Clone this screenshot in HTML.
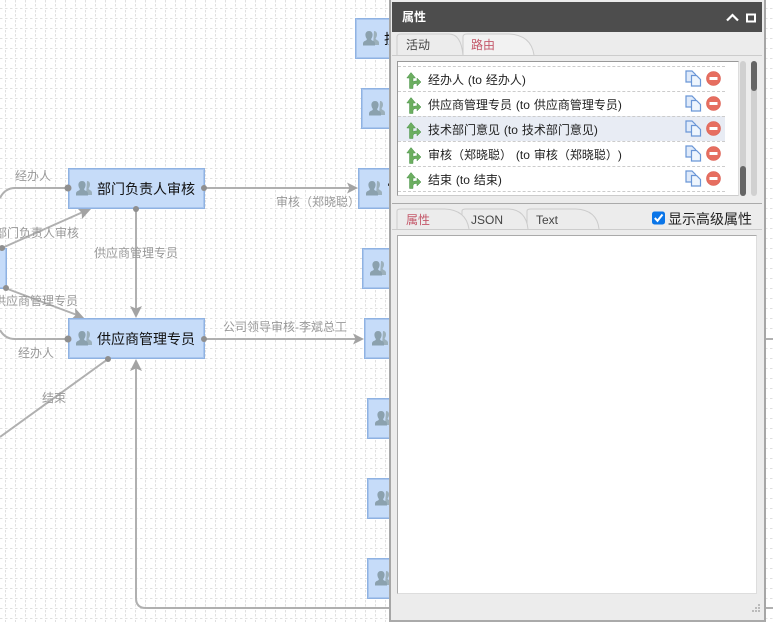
<!DOCTYPE html>
<html><head><meta charset="utf-8">
<style>
html,body{margin:0;padding:0}
body{width:773px;height:622px;position:relative;overflow:hidden;background:#fff;font-family:"Liberation Sans","Noto Sans CJK SC",sans-serif;color:#222}
.abs{position:absolute}
.node{position:absolute;height:39px;background:#c6dcf9;border:1px solid #8fb2e2;box-shadow:inset 0 0 0 1px #a9c6ee;font-size:14px;line-height:40px;color:#111;white-space:nowrap;overflow:hidden}
.node svg{position:absolute;left:7px;top:12px}
.node span{position:absolute;left:28px;top:0}
.lb{position:absolute;font-size:12px;line-height:16px;color:#999;white-space:nowrap}
#panel{position:absolute;left:389px;top:0;background:#ececec;border-left:2px solid #a6a6a6;border-right:2px solid #a6a6a6;border-bottom:2px solid #aaa;box-sizing:border-box;width:377px;height:622px}
.tabline{position:absolute;height:1px;background:#ccc}
.row{position:absolute;left:0;width:327px;height:24px;border-top:1px dashed #ccc;font-size:12px;line-height:25px;color:#222;white-space:nowrap}
.row.sel{background:#e8ecf4}
.row .t{position:absolute;left:30px;top:1px;word-spacing:.6px}
.row svg{position:absolute}
.g{left:8px;top:5px}.c{left:287px;top:3px}.m{left:308px;top:4px}
</style></head>
<body>
<svg class="abs" style="left:0;top:0" width="773" height="622">
<defs>
<pattern id="g" x="0" y="0" width="10" height="10" patternUnits="userSpaceOnUse">
<path d="M0 8.500h2.500M5 8.500h2.500M5.500 0v2.500M5.500 4v2.500" stroke="#e0e0e0" stroke-width="1" fill="none"/>
</pattern>
<symbol id="p" viewBox="0 0 16 15">
<path d="M11 0c2 0 3 1.500 3 3.500 0 1.700-.7 3-1.300 3.800-.2.800.3 1.300 1.300 1.800 1 .4 1.700.9 2 2.400V14H10z" fill="#9cb0bb"/>
<path d="M6 0c2.400 0 3.600 1.700 3.600 3.800 0 1.800-.7 3.200-1.400 4.100-.2.900.4 1.400 1.500 1.900 1.200.5 2 1 2.300 2.400V14.500H0v-2.300c.3-1.400 1.100-1.900 2.300-2.400 1.100-.5 1.700-1 1.500-1.900C3.100 7 2.400 5.600 2.400 3.800 2.400 1.700 3.800 0 6 0z" fill="#8ba1ae"/>
</symbol>
<symbol id="ga" viewBox="0 0 16 18">
<path d="M5 .5L9.500 6H7V10Q7.500 9 9.500 9H11V6L15 10L11 14V11.500H9.500Q7.500 11.500 7 13.500V16.500H3.500V6H.8z" fill="#6cae60" stroke="#4a934a" stroke-width=".5"/>
</symbol>
<symbol id="cp" viewBox="0 0 17 17">
<path d="M1 1H7L10.500 4.500V12H1z" fill="#dfeafa" stroke="#6a96d6" stroke-width="1.200"/>
<path d="M6.500 5.500H11.500L15.500 9.500V16H6.500z" fill="#eef5fd" stroke="#6a96d6" stroke-width="1.200"/>
</symbol>
<symbol id="mn" viewBox="0 0 15 15">
<circle cx="7.500" cy="7.500" r="7" fill="#e66e60" stroke="#dc5f53" stroke-width=".6"/><rect x="3.500" y="6" width="8" height="3" fill="#fff"/>
</symbol>
</defs>
<rect width="773" height="622" fill="url(#g)"/>
<g fill="none" stroke="#b0b0b0" stroke-width="2">
<path d="M0 198Q5 188 15 188H68"/>
<path d="M0 330Q5 339 15 339H68"/>
<path d="M2 248L83 212"/>
<path d="M5 288L77 315"/>
<path d="M108 359L0 437"/>
<path d="M136 209V312"/>
<path d="M136 365V598Q136 608 146 608H773"/>
<path d="M204 188H352"/>
<path d="M204 339H358"/>
<path d="M760 339H773"/>
</g>
<g fill="#a3a3a3">
<path d="M91 209L82 219L81.700 212.700L77 208z"/>
<path d="M85 319L71 319.500L75.500 315.200L75 308z"/>
<path d="M136 318L130 306L136 308.500L142 306z"/>
<path d="M136 359L130 371L136 368.500L142 371z"/>
<path d="M358 188L347 182.500L349.500 188L347 193.500z"/>
<path d="M364 339L353 333.500L355.500 339L353 344.500z"/>
</g>
</svg>

<div class="node" style="left:-8px;top:248px;width:13px;"></div>
<div class="node" style="left:68px;top:168px;width:135px"><svg width="16" height="15"><use href="#p"/></svg><span>部门负责人审核</span></div>
<div class="node" style="left:68px;top:318px;width:135px"><svg width="16" height="15"><use href="#p"/></svg><span>供应商管理专员</span></div>
<div class="node" style="left:355px;top:18px;width:60px"><svg width="16" height="15"><use href="#p"/></svg><span style="left:28px">技术部门</span></div>
<div class="node" style="left:361px;top:88px;width:60px"><svg width="16" height="15"><use href="#p"/></svg></div>
<div class="node" style="left:358px;top:168px;width:60px"><svg width="16" height="15"><use href="#p"/></svg><span>审核</span></div>
<div class="node" style="left:362px;top:248px;width:60px"><svg width="16" height="15"><use href="#p"/></svg></div>
<div class="node" style="left:364px;top:318px;width:60px"><svg width="16" height="15"><use href="#p"/></svg></div>
<div class="node" style="left:367px;top:398px;width:60px"><svg width="16" height="15"><use href="#p"/></svg></div>
<div class="node" style="left:367px;top:478px;width:60px"><svg width="16" height="15"><use href="#p"/></svg></div>
<div class="node" style="left:367px;top:558px;width:60px"><svg width="16" height="15"><use href="#p"/></svg></div>

<svg class="abs" style="left:0;top:0" width="390" height="622">
<g fill="#8f8f8f">
<circle cx="68" cy="188" r="3.500"/><circle cx="204" cy="188" r="3"/><circle cx="136" cy="209" r="3"/>
<circle cx="68" cy="339" r="3.500"/><circle cx="204" cy="339" r="3"/><circle cx="108" cy="359" r="3"/>
<circle cx="6" cy="288" r="3"/><circle cx="2" cy="248" r="3"/>
</g>
</svg>

<div class="lb" style="left:15px;top:168px">经办人</div>
<div class="lb" style="left:-5px;top:225px">部门负责人审核</div>
<div class="lb" style="left:94px;top:245px">供应商管理专员</div>
<div class="lb" style="left:-6px;top:293px">供应商管理专员</div>
<div class="lb" style="left:18px;top:345px">经办人</div>
<div class="lb" style="left:42px;top:390px">结束</div>
<div class="lb" style="left:276px;top:194px">审核（郑晓聪）</div>
<div class="lb" style="left:223px;top:319px">公司领导审核-李斌总工</div>

<div id="panel">
  <div class="abs" style="left:1px;top:2px;width:370px;height:30px;background:#4d4d4d;color:#fff;font-size:12px;font-weight:bold;line-height:31px"><span style="position:absolute;left:10px">属性</span>
    <svg class="abs" style="left:334px;top:10px" width="30" height="12"><path d="M1 8.500L6.500 3L12 8.500" fill="none" stroke="#fff" stroke-width="2.200"/><rect x="21" y="2.500" width="8" height="7" fill="none" stroke="#fff" stroke-width="2"/></svg>
  </div>

  <svg class="abs" style="left:0;top:32px" width="240" height="26">
    <path d="M6 23V5Q6 2 10 2H58Q70 2 72 23" fill="#ececec" stroke="#ccc"/>
    <path d="M72 23V5Q72 2 76 2H118Q140 3 143 23" fill="#f2f2f2" stroke="#ccc"/>
  </svg>
  <div class="abs" style="left:15px;top:37px;font-size:12px;line-height:16px;color:#444">活动</div>
  <div class="abs" style="left:80px;top:37px;font-size:12px;line-height:16px;color:#c4586a">路由</div>
  <div class="tabline" style="left:1px;top:55px;width:370px"></div>

  <div class="abs" style="left:6px;top:61px;width:342px;height:135px;background:#fff;border:1px solid #999;border-right:1px solid #ddd;border-bottom:1px solid #ccc;box-sizing:border-box;overflow:hidden">
    <div class="row" style="top:4px"><svg class="g" width="16" height="18"><use href="#ga"/></svg><span class="t">经办人 (to 经办人)</span><svg class="c" width="17" height="17"><use href="#cp"/></svg><svg class="m" width="15" height="15"><use href="#mn"/></svg></div>
    <div class="row" style="top:29px"><svg class="g" width="16" height="18"><use href="#ga"/></svg><span class="t">供应商管理专员 (to 供应商管理专员)</span><svg class="c" width="17" height="17"><use href="#cp"/></svg><svg class="m" width="15" height="15"><use href="#mn"/></svg></div>
    <div class="row sel" style="top:54px"><svg class="g" width="16" height="18"><use href="#ga"/></svg><span class="t">技术部门意见 (to 技术部门意见)</span><svg class="c" width="17" height="17"><use href="#cp"/></svg><svg class="m" width="15" height="15"><use href="#mn"/></svg></div>
    <div class="row" style="top:79px"><svg class="g" width="16" height="18"><use href="#ga"/></svg><span class="t">审核（郑晓聪） (to 审核（郑晓聪）<span style="margin-left:6px">)</span></span><svg class="c" width="17" height="17"><use href="#cp"/></svg><svg class="m" width="15" height="15"><use href="#mn"/></svg></div>
    <div class="row" style="top:104px"><svg class="g" width="16" height="18"><use href="#ga"/></svg><span class="t">结束 (to 结束)</span><svg class="c" width="17" height="17"><use href="#cp"/></svg><svg class="m" width="15" height="15"><use href="#mn"/></svg></div>
    <div class="abs" style="left:0;top:129px;width:327px;border-top:1px dashed #ccc"></div>
  </div>
  <div class="abs" style="left:349px;top:61px;width:6px;height:135px;background:#d0d0d0;border-radius:3px"></div>
  <div class="abs" style="left:349px;top:166px;width:6px;height:30px;background:#666;border-radius:3px"></div>
  <div class="abs" style="left:360px;top:61px;width:6px;height:135px;background:#d0d0d0;border-radius:3px"></div>
  <div class="abs" style="left:360px;top:61px;width:6px;height:30px;background:#666;border-radius:3px"></div>

  <div class="abs" style="left:1px;top:203px;width:370px;height:1px;background:#aaa"></div>
  <svg class="abs" style="left:0;top:206px" width="240" height="26">
    <path d="M136 23V5Q136 3 140 3H185Q206 4 208 23" fill="#ececec" stroke="#ccc"/>
    <path d="M71 23V5Q71 3 75 3H118Q135 4 137 23" fill="#ececec" stroke="#ccc"/>
    <path d="M6 23V5Q6 3 10 3H54Q75 4 78 23" fill="#ececec" stroke="#ccc"/>
  </svg>
  <div class="abs" style="left:15px;top:212px;font-size:12px;line-height:16px;color:#c4586a">属性</div>
  <div class="abs" style="left:80px;top:212px;font-size:12px;line-height:16px;color:#444">JSON</div>
  <div class="abs" style="left:145px;top:212px;font-size:12px;line-height:16px;color:#444">Text</div>
  <div class="tabline" style="left:1px;top:229px;width:370px"></div>
  <svg class="abs" style="left:261px;top:211px" width="14" height="14"><rect width="13" height="13" y=".5" rx="2.500" fill="#0a75e8"/><path d="M2.800 7L5.500 9.800L10.500 3.500" fill="none" stroke="#fff" stroke-width="2"/></svg>
  <div class="abs" style="left:277px;top:210px;font-size:14px;line-height:18px;color:#222;white-space:nowrap">显示高级属性</div>

  <div class="abs" style="left:6px;top:235px;width:360px;height:359px;background:#fff;border:1px solid #aaa;border-right-color:#ddd;border-bottom-color:#ddd;box-sizing:border-box"></div>

  <svg class="abs" style="left:358px;top:603px" width="12" height="12" fill="#bbb"><rect x="9" y="1" width="2" height="2"/><rect x="6" y="4" width="2" height="2"/><rect x="9" y="4" width="2" height="2"/><rect x="3" y="7" width="2" height="2"/><rect x="6" y="7" width="2" height="2"/><rect x="9" y="7" width="2" height="2"/></svg>
</div>
</body></html>
